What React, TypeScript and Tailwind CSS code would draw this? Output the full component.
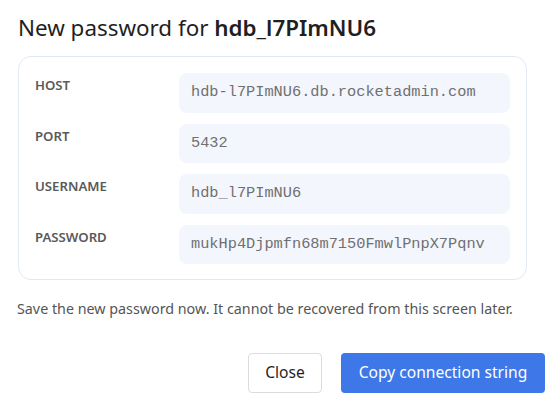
import React from "react";

const fields = [
  { label: "HOST", value: "hdb-l7PImNU6.db.rocketadmin.com" },
  { label: "PORT", value: "5432" },
  { label: "USERNAME", value: "hdb_l7PImNU6" },
  { label: "PASSWORD", value: "mukHp4Djpmfn68m7150FmwlPnpX7Pqnv" },
];

export default function App() {
  return (
    <main className="w-[551px] h-[398px] bg-white overflow-hidden font-['Noto_Sans',sans-serif] text-[#212121]">
      <div className="pl-[18px] pr-[6px] pt-[13px]">
        <h2 className="text-[22.4px] leading-[30px] text-[#1f1f1f]">
          New password for <span className="font-semibold">hdb_l7PImNU6</span>
        </h2>

        <section className="mt-[13px] mr-[18px] rounded-[13px] border border-[#e2e8f5] px-4 pt-[16px] pb-[15px] flex flex-col gap-[11px]">
          {fields.map((f) => (
            <div key={f.label} className="flex items-start">
              <div className="w-[144px] pt-[3px] text-[13.2px] font-semibold text-[#5a5a5a]">
                {f.label}
              </div>
              <div className="flex-1 h-[39.5px] rounded-[8px] bg-[#f3f6fd] pl-3 flex items-center font-['Liberation_Mono',monospace] text-[15.3px] text-[#707070]">
                {f.value}
              </div>
            </div>
          ))}
        </section>

        <p className="mt-[19px] -ml-[1px] text-[14.3px] leading-[20px] text-[#555]">
          Save the new password now. It cannot be recovered from this screen later.
        </p>

        <div className="mt-[34px] flex justify-end gap-[19px]">
          <button className="h-[40px] w-[74px] rounded-[4px] border border-[#dcdcdc] bg-white text-[15.6px] text-[#1f1f1f]">
            Close
          </button>
          <button className="h-[40px] w-[204px] rounded-[4px] bg-[#3d77e8] text-[15.6px] text-white">
            Copy connection string
          </button>
        </div>
      </div>
    </main>
  );
}
